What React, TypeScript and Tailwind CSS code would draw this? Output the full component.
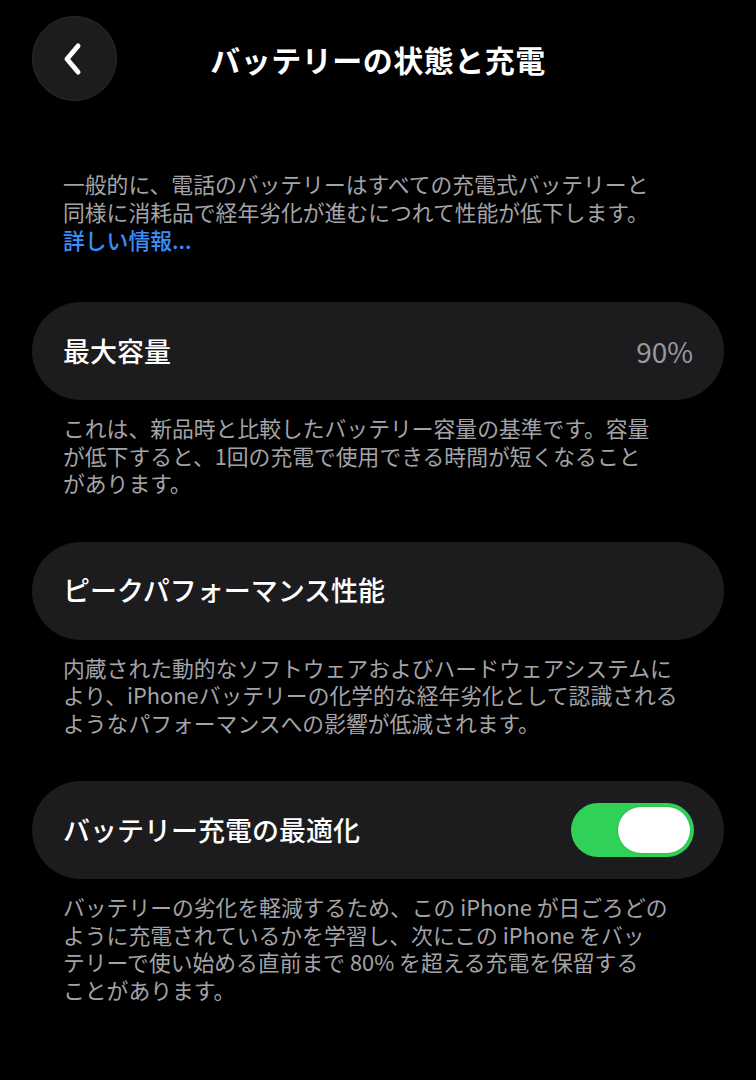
import React from "react";

const jp = { fontFamily: '"Noto Sans CJK JP", "Noto Sans", sans-serif' };

function Card({ children }: { children: React.ReactNode }) {
  return (
    <div className="flex h-[98px] items-center justify-between rounded-full bg-[#1c1c1e] pl-[31px] pr-[31px]">
      {children}
    </div>
  );
}

function Note({ lines }: { lines: string[] }) {
  return (
    <p className="mt-[14px] px-[31px] text-[21.8px] leading-[27.5px] text-[#a3a3a8]">
      {lines.map((l, i) => (
        <span key={i} className="block whitespace-nowrap">
          {l}
        </span>
      ))}
    </p>
  );
}

export default function App() {
  return (
    <div className="min-h-[1080px] w-[756px] bg-black px-8 text-white" style={jp}>
      {/* ── Header ───────────────────────────── */}
      <header className="grid grid-cols-[85px_1fr_85px] items-center pt-4">
        <button className="flex h-[85px] w-[85px] items-center justify-center rounded-full border border-[#2c2c2e] bg-[#1c1c1e]">
          <svg width="26" height="34" viewBox="0 0 26 34" className="-ml-1">
            <path
              d="M18 4 L7 17 L18 30"
              fill="none"
              stroke="white"
              strokeWidth="5"
              strokeLinecap="round"
              strokeLinejoin="round"
            />
          </svg>
        </button>
        <h1 className="text-center text-[30px] font-bold leading-none tracking-[0.5px]">
          バッテリーの状態と充電
        </h1>
        <div />
      </header>

      {/* ── Intro ────────────────────────────── */}
      <p className="mt-[69px] px-[31px] text-[21.8px] leading-[28px] text-[#a3a3a8]">
        <span className="block whitespace-nowrap">
          一般的に、電話のバッテリーはすべての充電式バッテリーと
        </span>
        <span className="block whitespace-nowrap">
          同様に消耗品で経年劣化が進むにつれて性能が低下します。
        </span>
        <span className="block font-medium text-[#3a8fff]">詳しい情報...</span>
      </p>

      {/* ── Max capacity ─────────────────────── */}
      <div className="mt-[48px]">
        <Card>
          <span className="text-[27px] font-medium">最大容量</span>
          <span className="text-[28px] text-[#98989e]">90%</span>
        </Card>
        <Note
          lines={[
            "これは、新品時と比較したバッテリー容量の基準です。容量",
            "が低下すると、1回の充電で使用できる時間が短くなること",
            "があります。",
          ]}
        />
      </div>

      {/* ── Peak performance ─────────────────── */}
      <div className="mt-[45px]">
        <Card>
          <span className="text-[27px] font-medium">ピークパフォーマンス性能</span>
        </Card>
        <Note
          lines={[
            "内蔵された動的なソフトウェアおよびハードウェアシステムに",
            "より、iPhoneバッテリーの化学的な経年劣化として認識される",
            "ようなパフォーマンスへの影響が低減されます。",
          ]}
        />
      </div>

      {/* ── Optimized charging ───────────────── */}
      <div className="mt-[45px]">
        <Card>
          <span className="text-[27px] font-medium">バッテリー充電の最適化</span>
          <div className="-mr-[1px] flex h-[54px] w-[123px] items-center justify-end rounded-full bg-[#30d158] pr-[4px]">
            <div className="h-[46px] w-[72px] rounded-full bg-white shadow-[0_0_2px_rgba(0,0,0,0.25)]" />
          </div>
        </Card>
        <Note
          lines={[
            "バッテリーの劣化を軽減するため、この iPhone が日ごろどの",
            "ように充電されているかを学習し、次にこの iPhone をバッ",
            "テリーで使い始める直前まで 80% を超える充電を保留する",
            "ことがあります。",
          ]}
        />
      </div>
    </div>
  );
}
